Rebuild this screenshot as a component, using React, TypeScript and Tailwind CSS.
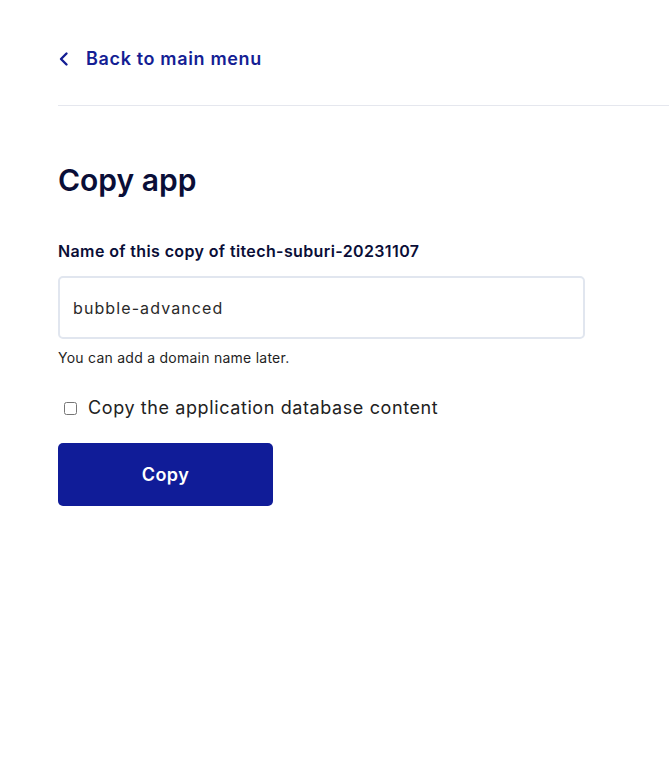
import { useState } from 'react'

export default function App() {
  const [name, setName] = useState('bubble-advanced')
  const [copyDb, setCopyDb] = useState(false)

  return (
    <div className="min-h-screen bg-white font-['Inter',sans-serif] pl-[58px]">
      {/* Back link */}
      <div className="pt-[46px] pb-[33px]">
        <button className="flex items-center gap-[16px] text-[#141e94]">
          <svg width="12" height="16" viewBox="0 0 12 16" fill="none">
            <path d="M8.5 2.5L3 8l5.5 5.5" stroke="currentColor" strokeWidth="2.4" strokeLinecap="round" strokeLinejoin="round" />
          </svg>
          <span className="text-[18px] font-semibold tracking-[0.65px] leading-[26px]">Back to main menu</span>
        </button>
      </div>
      <div className="border-t border-[#e5e7ee]" />

      {/* Form */}
      <div className="pt-[56px] w-[527px]">
        <h1 className="text-[30px] font-semibold text-[#0a0e37] tracking-[0px] leading-[36px]">Copy app</h1>

        <label className="block mt-[42px] text-[16px] font-semibold text-[#0a0e37] tracking-[0.38px] leading-[22px]">
          Name of this copy of titech-suburi-20231107
        </label>
        <input
          value={name}
          onChange={(e) => setName(e.target.value)}
          className="mt-[14px] w-full h-[63px] rounded-[5px] border-2 border-[#e1e6ef] px-[13px] text-[16px] text-[#2a2a2a] tracking-[1.1px] outline-none"
        />
        <p className="mt-[10px] text-[14px] text-[#1f1f1f] tracking-[0.25px] leading-[18px]">You can add a domain name later.</p>

        <label className="mt-[29px] flex items-center gap-[11px] pl-[6px] cursor-pointer">
          <input
            type="checkbox"
            checked={copyDb}
            onChange={(e) => setCopyDb(e.target.checked)}
            className="w-[13px] h-[13px] accent-[#141e94]"
          />
          <span className="text-[18px] text-[#222] tracking-[0.6px] leading-[24px]">Copy the application database content</span>
        </label>

        <button className="mt-[23px] w-[215px] h-[63px] rounded-[5px] bg-[#101c98] text-white text-[18px] font-semibold tracking-[0.5px]">
          Copy
        </button>
      </div>
    </div>
  )
}
